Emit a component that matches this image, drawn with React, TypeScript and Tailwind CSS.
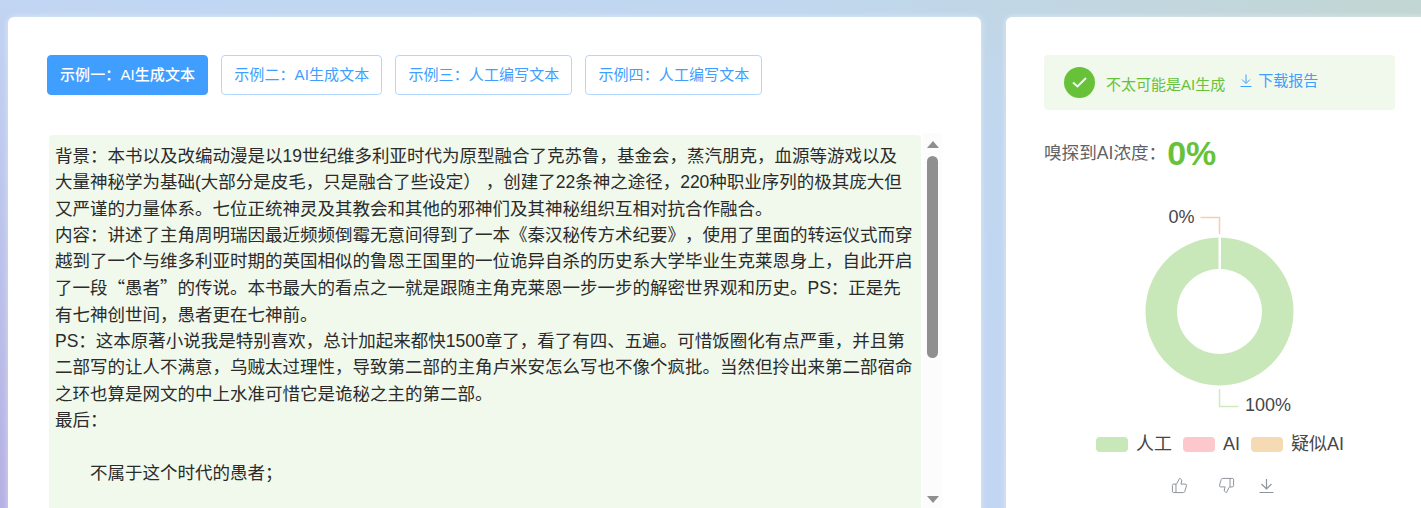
import React from "react";
import { ThumbsUp, ThumbsDown } from "lucide-react";

const tabs = [
  "示例一：AI生成文本",
  "示例二：AI生成文本",
  "示例三：人工编写文本",
  "示例四：人工编写文本",
];

const linesBefore = [
  "背景：本书以及改编动漫是以19世纪维多利亚时代为原型融合了克苏鲁，基金会，蒸汽朋克，血源等游戏以及",
  "大量神秘学为基础(大部分是皮毛，只是融合了些设定） ，创建了22条神之途径，220种职业序列的极其庞大但",
  "又严谨的力量体系。七位正统神灵及其教会和其他的邪神们及其神秘组织互相对抗合作融合。",
  "内容：讲述了主角周明瑞因最近频频倒霉无意间得到了一本《秦汉秘传方术纪要》，使用了里面的转运仪式而穿",
  "越到了一个与维多利亚时期的英国相似的鲁恩王国里的一位诡异自杀的历史系大学毕业生克莱恩身上，自此开启",
];

const linesAfter = [
  "有七神创世间，愚者更在七神前。",
  "PS：这本原著小说我是特别喜欢，总计加起来都快1500章了，看了有四、五遍。可惜饭圈化有点严重，并且第",
  "二部写的让人不满意，乌贼太过理性，导致第二部的主角卢米安怎么写也不像个疯批。当然但拎出来第二部宿命",
  "之环也算是网文的中上水准可惜它是诡秘之主的第二部。",
  "最后：",
  "　",
  "　　不属于这个时代的愚者；",
];

const font = "font-['Liberation_Sans','Noto_Sans_CJK_SC',sans-serif]";

function Donut() {
  return (
    <svg width="220" height="220" viewBox="0.5 0 220 220" className="block">
      <path
        d="M110 27.5a74 74 0 1 1 -0.01 0zM110 59a42.5 42.5 0 1 0 0.01 0z"
        fill="#c9e8b9"
        fillRule="evenodd"
        transform="translate(0 10)"
      />
      <rect x="109" y="35" width="2.5" height="36" fill="#fff" />
      <path d="M110 34V17.5H91" fill="none" stroke="#f6cdb2" strokeWidth="1.5" />
      <path d="M110 189V206.5H129" fill="none" stroke="#cfeac1" strokeWidth="1.5" />
      <text x="59" y="23" fontSize="18" fill="#464646">0%</text>
      <text x="135.5" y="210.5" fontSize="18" fill="#464646">100%</text>
    </svg>
  );
}

function LegendItem({ color, label }: { color: string; label: string }) {
  return (
    <div className="flex items-center gap-2">
      <span className={`h-[15px] w-8 rounded ${color}`} />
      <span className="text-lg leading-6 text-[#464646]">{label}</span>
    </div>
  );
}

export default function App() {
  return (
    <div
      className={`${font} flex h-[508px] gap-[25px] overflow-hidden bg-[linear-gradient(30deg,#b6b0e4_0%,#c2d6f3_40%,#c0d7ef_72%,#c2d6d2_100%)] pl-2 pt-[17px]`}
    >
      <div className="h-[520px] w-[973px] shrink-0 rounded-t-md bg-white pl-[39px] pt-[38px] shadow-[0_0_6px_rgba(255,255,255,0.5)]">
        <div className="flex gap-[13px]">
          {tabs.map((tab, i) => (
            <button
              key={tab}
              className={`h-10 rounded-[4px] border px-3 text-[15px] tracking-[0.1px] ${
                i === 0
                  ? "border-[#409eff] bg-[#409eff] font-medium text-white"
                  : "border-[#b3d8ff] bg-white text-[#409eff]"
              }`}
            >
              {tab}
            </button>
          ))}
        </div>

        <div className="mt-[38px] flex h-[400px] w-[895px]">
          <div className="m-[2px] h-[380px] w-[872px] shrink-0 whitespace-pre rounded-[4px] bg-[#f0f9eb] px-[6px] py-2 text-[17.5px] leading-[26.3px] text-[#2b2b2b] [text-spacing-trim:space-all]">
            {linesBefore.map((line) => (
              <div key={line}>{line}</div>
            ))}
            <div>
              了一段<span className="font-['Noto_Sans_CJK_SC']">“</span>愚者
              <span className="font-['Noto_Sans_CJK_SC']">”</span>
              的传说。本书最大的看点之一就是跟随主角克莱恩一步一步的解密世界观和历史。PS：正是先
            </div>
            {linesAfter.map((line) => (
              <div key={line}>{line}</div>
            ))}
          </div>
          <div className="flex h-[375px] w-[19px] flex-col items-center bg-[#fcfcfc] pt-2">
            <span className="h-0 w-0 border-x-[6px] border-b-[7px] border-x-transparent border-b-[#8f8f8f]" />
            <span className="mt-[8px] h-[202px] w-[11px] rounded-full bg-[#8f8f8f]" />
            <span className="mt-[138px] h-0 w-0 border-x-[6px] border-t-[7px] border-x-transparent border-t-[#8f8f8f]" />
          </div>
        </div>
      </div>

      <div className="h-[520px] w-[427px] shrink-0 rounded-t-md bg-white px-[38px] pt-[38px] shadow-[0_0_6px_rgba(255,255,255,0.5)]">
        <div className="flex h-[55px] items-center rounded-[4px] bg-[#f0f9eb] pl-5">
          <span className="flex h-[31px] w-[31px] items-center justify-center rounded-full bg-[#67c23a]">
            <svg width="15" height="11" viewBox="0 0 15 11" fill="none">
              <path d="M1 5.5l4.5 4 8.5-8.5" stroke="#f0f9eb" strokeWidth="2" />
            </svg>
          </span>
          <span className="ml-[11px] mt-1 text-[15px] leading-6 text-[#67c23a]">不太可能是AI生成</span>
          <span className="mb-1 ml-[15px] flex items-center gap-[6px] text-[15px] leading-6 text-[#409eff]">
            <svg width="12" height="13" viewBox="0 0 12 13" fill="none" stroke="#409eff" strokeWidth="1">
              <path d="M6 0.5V9M2 5.5L6 9.5L10 5.5M0.5 12.5H11.5" />
            </svg>
            下载报告
          </span>
        </div>

        <div className="mt-[19px] flex items-center">
          <span className="text-[17.6px] text-[#606266]">嗅探到AI浓度：</span>
          <span className="-mt-[1px] ml-[1px] text-[34px] font-bold leading-[50px] text-[#67c23a]">0%</span>
        </div>

        <div className="mt-[22px] flex justify-center">
          <Donut />
        </div>

        <div className="mt-3 flex justify-center gap-[11px] pl-[1px]">
          <LegendItem color="bg-[#c9e8b9]" label="人工" />
          <LegendItem color="bg-[#fdc8cb]" label="AI" />
          <LegendItem color="bg-[#f6dab4]" label="疑似AI" />
        </div>

        <div className="mt-[21px] flex justify-center pl-[6px] text-[#8f949c]">
          <ThumbsUp size={17} strokeWidth={1.4} />
          <ThumbsDown size={17} strokeWidth={1.4} className="ml-[30px]" />
          <svg width="17" height="17" viewBox="0 0 17 17" fill="none" stroke="currentColor" strokeWidth="1.2" className="ml-[23px]">
            <path d="M8.5 2V11.5M3.5 7L8.5 12L13.5 7M1.5 15.5H15.5" />
          </svg>
        </div>
      </div>
    </div>
  );
}
